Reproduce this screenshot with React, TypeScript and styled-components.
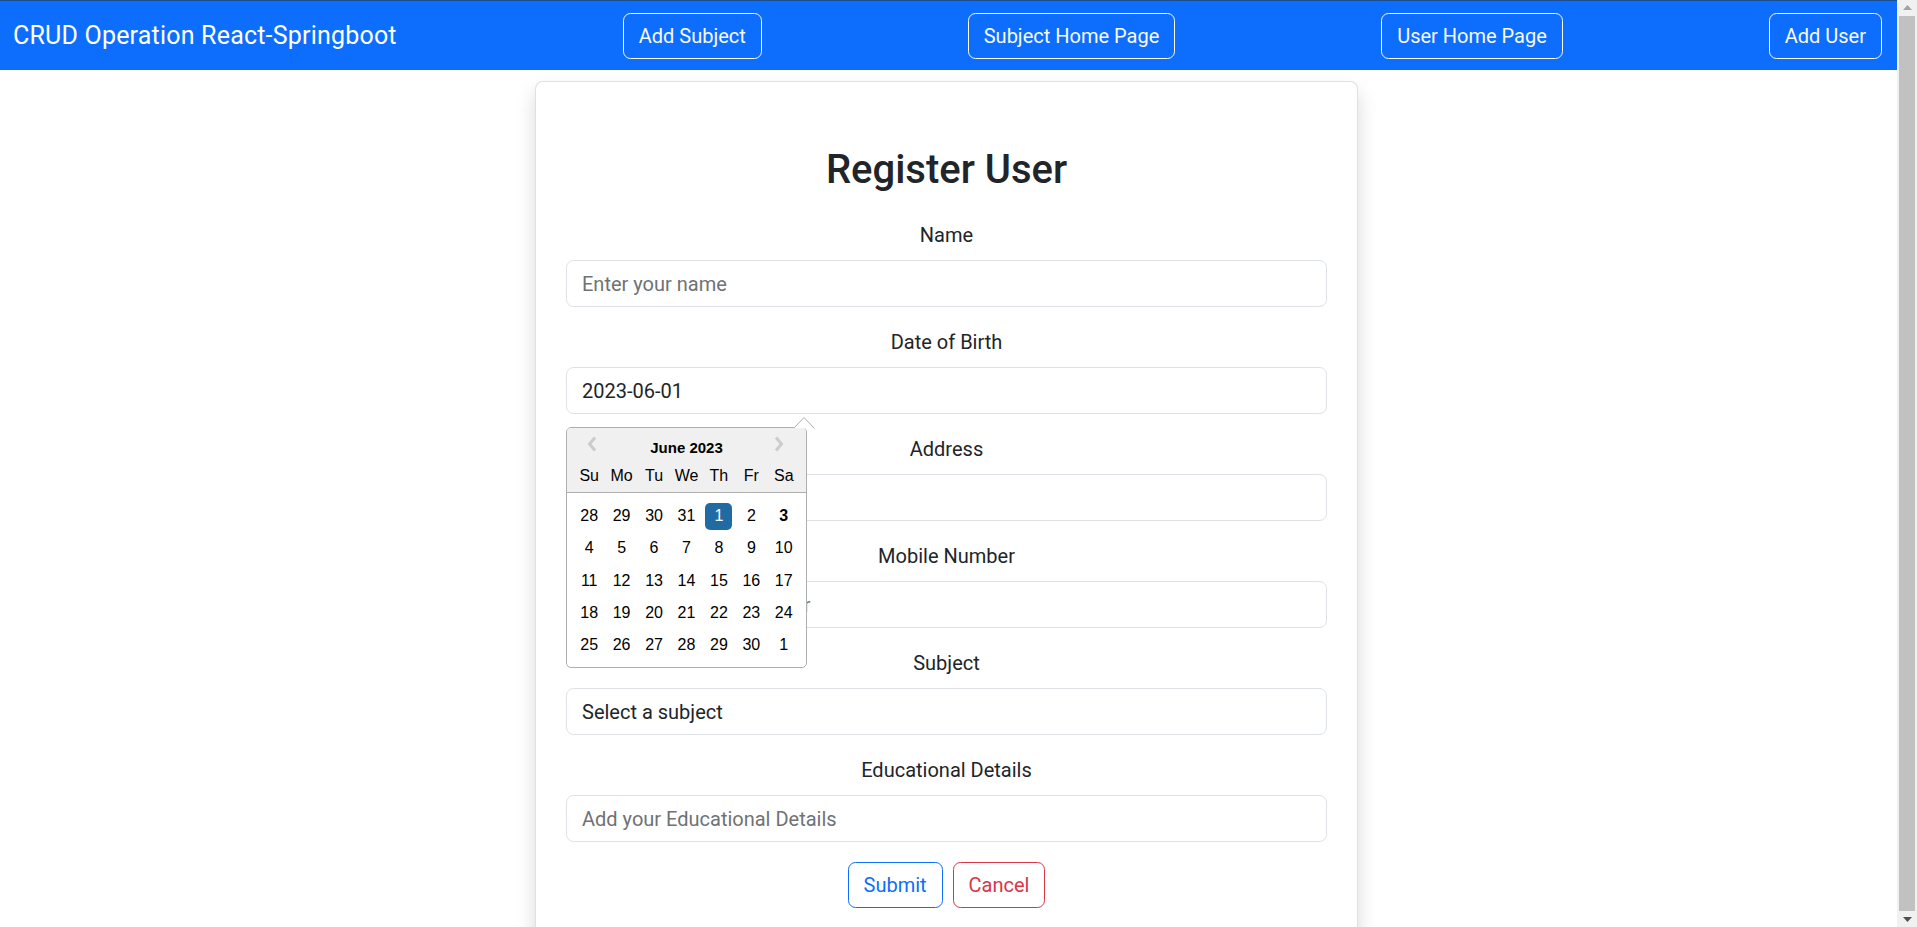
import React from "react";
import styled, { createGlobalStyle } from "styled-components";

const GlobalStyle = createGlobalStyle`
  *, *::before, *::after { box-sizing: border-box; }
  html, body { margin: 0; padding: 0; background: #fff; }
  body {
    font-family: Roboto, "Noto Sans", "Liberation Sans", sans-serif;
    color: #212529;
    overflow: hidden;
  }
`;

const Screen = styled.div`
  display: flex;
  width: 100vw;
  height: 100vh;
  overflow: hidden;
`;

const Page = styled.div`
  flex: 1;
  min-width: 0;
  overflow: hidden;
`;

const Navbar = styled.nav`
  height: 70px;
  border-top: 1px solid #1d4f8f;
  background: #0d6efd;
  display: flex;
  align-items: center;
  justify-content: space-between;
  padding: 0 15px 0 13px;
`;

const Brand = styled.span`
  font-size: 25px;
  letter-spacing: 0.2px;
  color: #fff;
  margin-right: 20px;
  white-space: nowrap;
`;

const NavButton = styled.button`
  height: 46px;
  padding: 0 15px;
  border: 1px solid #f8f9fa;
  border-radius: 7.5px;
  background: transparent;
  color: #f8f9fa;
  font-family: inherit;
  font-size: 20px;
  line-height: 30px;
  white-space: nowrap;
`;

const Main = styled.main`
  padding-right: 4px;
`;

const Card = styled.section`
  width: 823px;
  margin: 11px auto 0;
  padding: 30px;
  border: 1px solid rgba(0, 0, 0, 0.12);
  border-radius: 8px;
  background: #fff;
  box-shadow: 0 10px 20px rgba(0, 0, 0, 0.15);
`;

const Title = styled.h2`
  margin: 34px 30px 26px;
  font-size: 40px;
  line-height: 48px;
  font-weight: 500;
  text-align: center;
  color: #212529;
`;

const Group = styled.div`
  margin-bottom: 20px;
`;

const Label = styled.label`
  display: block;
  text-align: center;
  font-size: 20px;
  line-height: 30px;
  margin-bottom: 10px;
  color: #212529;
`;

const Control = styled.input`
  display: block;
  width: 100%;
  height: 47px;
  padding: 0 15px;
  border: 1px solid #dee2e6;
  border-radius: 7.5px;
  font-family: inherit;
  font-size: 20px;
  color: #212529;
  background: #fff;
  outline: none;
  &::placeholder { color: #6f7275; }
`;

const SelectControl = styled.select`
  display: block;
  width: 100%;
  height: 47px;
  padding: 0 15px;
  border: 1px solid #dee2e6;
  border-radius: 7.5px;
  font-family: inherit;
  font-size: 20px;
  color: #212529;
  background: #fff;
  appearance: none;
  outline: none;
`;

const DateWrap = styled.div`
  position: relative;
`;

const Actions = styled.div`
  display: flex;
  justify-content: center;
  gap: 10px;
`;

const OutlineButton = styled.button<{ $tone: string }>`
  height: 46px;
  padding: 0 15px;
  border: 1px solid ${(p) => p.$tone};
  border-radius: 7.5px;
  background: transparent;
  color: ${(p) => p.$tone};
  font-family: inherit;
  font-size: 20px;
`;

/* ---------- date picker popup ---------- */

const Popup = styled.div`
  position: absolute;
  top: calc(100% + 13px);
  left: 0;
  width: 241px;
  border: 1px solid #aeaeae;
  border-radius: 5px;
  background: #fff;
  font-family: "Liberation Sans", Arial, sans-serif;
  color: #000;
  z-index: 5;
`;

const Caret = styled.svg`
  position: absolute;
  top: -12px;
  left: 226px;
`;

const PickerHeader = styled.div`
  position: relative;
  background: #f0f0f0;
  border-bottom: 1px solid #aeaeae;
  border-radius: 4px 4px 0 0;
  padding: 5px 6px 3px;
`;

const MonthTitle = styled.div`
  height: 30px;
  line-height: 30px;
  text-align: center;
  font-weight: 700;
  font-size: 15px;
`;

const NavArrow = styled.svg<{ $side: "left" | "right" }>`
  position: absolute;
  top: 8px;
  ${(p) => (p.$side === "left" ? "left: 20px;" : "right: 22px;")}
`;

const DayGrid = styled.div<{ $rowHeight: number }>`
  display: grid;
  grid-template-columns: repeat(7, 1fr);
  grid-auto-rows: ${(p) => p.$rowHeight}px;
`;

const DayName = styled.div`
  display: flex;
  align-items: center;
  justify-content: center;
  font-size: 16px;
`;

const PickerBody = styled.div`
  padding: 7px 6px 6px;
`;

const Day = styled.div`
  display: flex;
  align-items: center;
  justify-content: center;
`;

const DayBox = styled.span<{ $selected?: boolean; $today?: boolean }>`
  width: 27px;
  height: 27px;
  display: flex;
  align-items: center;
  justify-content: center;
  border-radius: 5px;
  font-size: 16px;
  font-weight: ${(p) => (p.$today ? 700 : 400)};
  background: ${(p) => (p.$selected ? "#216ba5" : "transparent")};
  color: ${(p) => (p.$selected ? "#fff" : "#000")};
`;

/* ---------- fake browser scrollbar ---------- */

const Scrollbar = styled.div`
  width: 20px;
  flex: none;
  background: #f1f1f1;
  display: flex;
  flex-direction: column;
  align-items: center;
  padding: 5px 2px;
  gap: 6px;
`;

const ScrollThumb = styled.div`
  flex: 1;
  width: 100%;
  background: #c1c1c1;
`;

const dayNames = ["Su", "Mo", "Tu", "We", "Th", "Fr", "Sa"];
const days = [
  28, 29, 30, 31, 1, 2, 3,
  4, 5, 6, 7, 8, 9, 10,
  11, 12, 13, 14, 15, 16, 17,
  18, 19, 20, 21, 22, 23, 24,
  25, 26, 27, 28, 29, 30, 1,
];

function DatePopup() {
  return (
    <Popup>
      <Caret width="22" height="13" viewBox="0 0 22 13">
        <path d="M0.5 12.5 L11 1.5 L21.5 12.5 Z" fill="#fff" stroke="none" />
        <path d="M0.5 12.5 L11 1.5 L21.5 12.5" fill="none" stroke="#aeaeae" strokeWidth="1" />
      </Caret>
      <PickerHeader>
        <NavArrow $side="left" width="10" height="16" viewBox="0 0 10 16">
          <path d="M8 1.5 L2.5 8 L8 14.5" fill="none" stroke="#cccccc" strokeWidth="3" />
        </NavArrow>
        <NavArrow $side="right" width="10" height="16" viewBox="0 0 10 16">
          <path d="M2 1.5 L7.5 8 L2 14.5" fill="none" stroke="#cccccc" strokeWidth="3" />
        </NavArrow>
        <MonthTitle>June 2023</MonthTitle>
        <DayGrid $rowHeight={26}>
          {dayNames.map((d) => (
            <DayName key={d}>{d}</DayName>
          ))}
        </DayGrid>
      </PickerHeader>
      <PickerBody>
        <DayGrid $rowHeight={32.3}>
          {days.map((d, i) => (
            <Day key={i}>
              <DayBox $selected={i === 4} $today={i === 6}>
                {d}
              </DayBox>
            </Day>
          ))}
        </DayGrid>
      </PickerBody>
    </Popup>
  );
}

export default function App() {
  return (
    <>
      <GlobalStyle />
      <Screen>
        <Page>
          <Navbar>
            <Brand>CRUD Operation React-Springboot</Brand>
            <NavButton>Add Subject</NavButton>
            <NavButton>Subject Home Page</NavButton>
            <NavButton>User Home Page</NavButton>
            <NavButton>Add User</NavButton>
          </Navbar>
          <Main>
            <Card>
              <Title>Register User</Title>
              <Group>
                <Label>Name</Label>
                <Control placeholder="Enter your name" />
              </Group>
              <Group>
                <Label>Date of Birth</Label>
                <DateWrap>
                  <Control defaultValue="2023-06-01" />
                  <DatePopup />
                </DateWrap>
              </Group>
              <Group>
                <Label>Address</Label>
                <Control placeholder="Enter your address" />
              </Group>
              <Group>
                <Label>Mobile Number</Label>
                <Control placeholder="Enter your mobile number" />
              </Group>
              <Group>
                <Label>Subject</Label>
                <SelectControl defaultValue="">
                  <option value="">Select a subject</option>
                </SelectControl>
              </Group>
              <Group>
                <Label>Educational Details</Label>
                <Control placeholder="Add your Educational Details" />
              </Group>
              <Actions>
                <OutlineButton $tone="#0d6efd">Submit</OutlineButton>
                <OutlineButton $tone="#dc3545">Cancel</OutlineButton>
              </Actions>
            </Card>
          </Main>
        </Page>
        <Scrollbar>
          <svg width="9" height="5" viewBox="0 0 9 5">
            <path d="M0 5 L4.5 0 L9 5 Z" fill="#a3a3a3" />
          </svg>
          <ScrollThumb />
          <svg width="9" height="5" viewBox="0 0 9 5">
            <path d="M0 0 L4.5 5 L9 0 Z" fill="#505050" />
          </svg>
        </Scrollbar>
      </Screen>
    </>
  );
}
